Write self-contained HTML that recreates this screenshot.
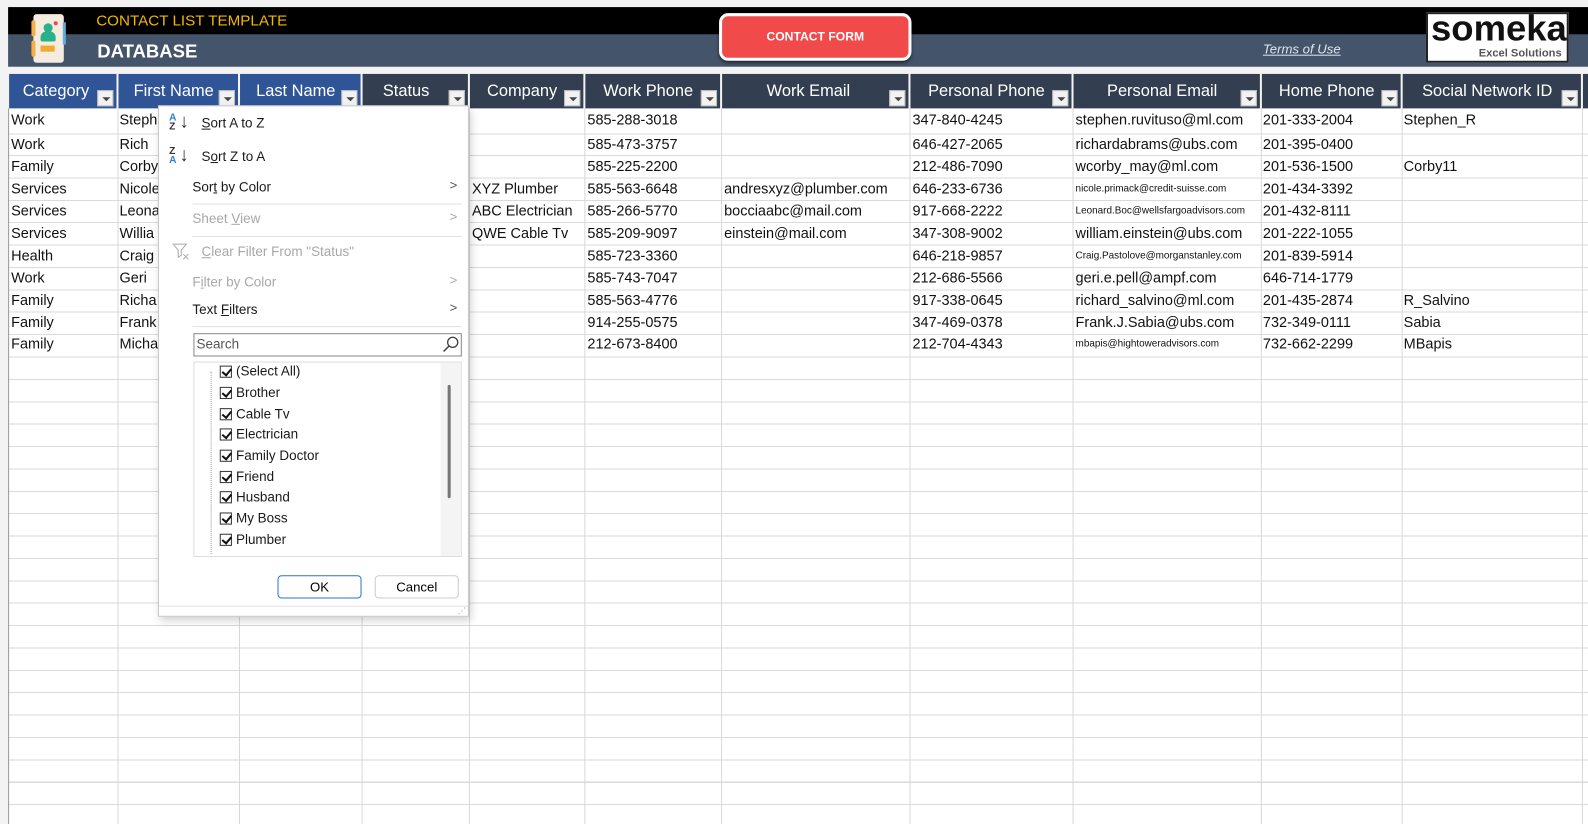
<!DOCTYPE html>
<html><head><meta charset="utf-8"><style>
*{margin:0;padding:0;box-sizing:border-box}
body{width:1588px;height:814px;overflow:hidden;background:#f3f3f3;font-family:"Liberation Sans",Calibri,sans-serif;position:relative}
#w{position:absolute;left:0;top:0;width:1568px;height:804px;transform:scale(1.01276);transform-origin:0 0}
.a{position:absolute;white-space:nowrap}
.t{position:absolute;font-size:14.3px;color:#111;white-space:nowrap;line-height:18px}
.s{font-size:9.8px}
.h{position:absolute;top:73px;height:34px;color:#fff;font-size:16.2px;line-height:34px;text-align:center}
.dd{position:absolute;width:16px;height:16px;background:#f2f2f2;border:1px solid #bbb;bottom:2px;right:3px}
.dd:after{content:"";position:absolute;left:4px;top:6px;border-left:4px solid transparent;border-right:4px solid transparent;border-top:4px solid #444}
.vl{position:absolute;top:107px;width:1px;height:707px;background:#d8d8d8}
.mi{position:absolute;font-family:"Liberation Sans",sans-serif;font-size:13.3px;color:#1a1a1a;white-space:nowrap}
.g{color:#a8a8a8}
.ar{position:absolute;right:10px;font-size:13px;color:#555}
.sep{position:absolute;left:190px;width:266px;height:1px;background:#e2e2e2}
.cb{position:absolute;font-size:13.3px;color:#1a1a1a;white-space:nowrap;line-height:16px}
.cb i{display:inline-block;width:12px;height:12px;border:1px solid #333;vertical-align:-2px;margin-right:4px;position:relative}
.cb i:after{content:"";position:absolute;left:3px;top:0px;width:4px;height:7px;border:solid #111;border-width:0 2px 2px 0;transform:rotate(40deg)}
</style></head><body><div id="w">
<div class="a" style="left:8px;top:7px;width:1560px;height:27px;background:#000"></div>
<div class="a" style="left:8px;top:34px;width:1560px;height:32px;background:#44546a"></div>
<div class="a" style="left:33px;top:14px;width:30px;height:48px;background:#f5ecdf;border-radius:3px"></div>
<div class="a" style="left:31px;top:20px;width:4px;height:16px;background:#f4b040;border-radius:2px"></div>
<div class="a" style="left:31px;top:40px;width:4px;height:16px;background:#f4b040;border-radius:2px"></div>
<div class="a" style="left:62px;top:22px;width:3px;height:22px;background:#5cb0e0"></div>
<div class="a" style="left:43px;top:23px;width:9px;height:9px;background:#27b28c;border-radius:50%"></div>
<div class="a" style="left:40px;top:31px;width:15px;height:10px;background:#27b28c;border-radius:6px 6px 2px 2px"></div>
<div class="a" style="left:53px;top:21px;width:4px;height:4px;background:#e84a5f;border-radius:50%"></div>
<div class="a" style="left:40px;top:45px;width:14px;height:6px;background:#f4a930"></div>
<div class="a" style="left:95px;top:12px;font-size:15px;color:#f2b800">CONTACT LIST TEMPLATE</div>
<div class="a" style="left:96px;top:40px;font-size:18.3px;color:#fff;font-weight:bold">DATABASE</div>
<div class="a" style="left:710px;top:13px;width:190px;height:47px;background:#f04a4a;border:3px solid #fff;border-radius:9px;box-shadow:0 2px 3px rgba(0,0,0,.5);color:#fff;font-weight:bold;font-size:12px;text-align:center;line-height:41px">CONTACT FORM</div>
<div class="a" style="left:1247px;top:41px;font-size:13px;color:#dfe6f0;font-style:italic;text-decoration:underline">Terms of Use</div>
<div class="a" style="left:1408px;top:12px;width:141px;height:50px;background:#fff;border:2px solid #222;overflow:hidden">
<div class="a" style="left:3px;top:-7px;font-size:36px;color:#111;font-weight:bold">someka</div>
<div class="a" style="right:5px;top:33px;font-size:11px;color:#555;font-weight:bold">Excel Solutions</div></div>
<div class="a" style="left:8px;top:107px;width:1580px;height:707px;background:#fff repeating-linear-gradient(to bottom,transparent 0,transparent 25px,#dadada 25px,#dadada 26px) 0 0/100% 26px no-repeat"></div>
<div class="a" style="left:8px;top:132px;width:1580px;height:682px;background:repeating-linear-gradient(to bottom,transparent 0,transparent 21.1px,#dadada 21.1px,#dadada 22.1px)"></div>
<div class="vl" style="left:8px;background:#999"></div>
<div class="vl" style="left:116px"></div><div class="vl" style="left:236px"></div><div class="vl" style="left:357px"></div><div class="vl" style="left:463px"></div><div class="vl" style="left:577px"></div><div class="vl" style="left:712px"></div><div class="vl" style="left:898px"></div><div class="vl" style="left:1059px"></div><div class="vl" style="left:1245px"></div><div class="vl" style="left:1384px"></div><div class="vl" style="left:1562px"></div>
<div class="a" style="left:8px;top:66px;width:1580px;height:7px;background:#f3f3f3"></div>
<div class="h" style="left:9px;width:106px;background:#2f5597">Category&nbsp;&nbsp;&nbsp;<div class="dd"></div></div>
<div class="h" style="left:117px;width:118px;background:#2f5597">First Name&nbsp;&nbsp;<div class="dd"></div></div>
<div class="h" style="left:237px;width:119px;background:#2f5597">Last Name&nbsp;&nbsp;<div class="dd"></div></div>
<div class="h" style="left:358px;width:104px;background:#333f50">Status&nbsp;&nbsp;&nbsp;&nbsp;<div class="dd"></div></div>
<div class="h" style="left:464px;width:112px;background:#333f50">Company&nbsp;&nbsp;<div class="dd"></div></div>
<div class="h" style="left:578px;width:133px;background:#333f50">Work Phone&nbsp;&nbsp;<div class="dd"></div></div>
<div class="h" style="left:713px;width:184px;background:#333f50">Work Email&nbsp;&nbsp;&nbsp;<div class="dd"></div></div>
<div class="h" style="left:899px;width:159px;background:#333f50">Personal Phone&nbsp;&nbsp;<div class="dd"></div></div>
<div class="h" style="left:1060px;width:184px;background:#333f50">Personal Email&nbsp;&nbsp;<div class="dd"></div></div>
<div class="h" style="left:1246px;width:137px;background:#333f50">Home Phone&nbsp;&nbsp;<div class="dd"></div></div>
<div class="h" style="left:1385px;width:176px;background:#333f50">Social Network ID&nbsp;&nbsp;<div class="dd"></div></div>
<div class="h" style="left:1563px;width:5px;background:#333f50"></div>
<div class="t" style="left:11px;top:110px">Work</div><div class="t" style="left:118px;top:110px">Steph</div><div class="t" style="left:580px;top:110px">585-288-3018</div><div class="t" style="left:901px;top:110px">347-840-4245</div><div class="t" style="left:1062px;top:110px">stephen.ruvituso@ml.com</div><div class="t" style="left:1247px;top:110px">201-333-2004</div><div class="t" style="left:1386px;top:110px">Stephen_R</div>
<div class="t" style="left:11px;top:134px">Work</div><div class="t" style="left:118px;top:134px">Rich</div><div class="t" style="left:580px;top:134px">585-473-3757</div><div class="t" style="left:901px;top:134px">646-427-2065</div><div class="t" style="left:1062px;top:134px">richardabrams@ubs.com</div><div class="t" style="left:1247px;top:134px">201-395-0400</div>
<div class="t" style="left:11px;top:156px">Family</div><div class="t" style="left:118px;top:156px">Corby</div><div class="t" style="left:580px;top:156px">585-225-2200</div><div class="t" style="left:901px;top:156px">212-486-7090</div><div class="t" style="left:1062px;top:156px">wcorby_may@ml.com</div><div class="t" style="left:1247px;top:156px">201-536-1500</div><div class="t" style="left:1386px;top:156px">Corby11</div>
<div class="t" style="left:11px;top:178px">Services</div><div class="t" style="left:118px;top:178px">Nicole</div><div class="t" style="left:466px;top:178px">XYZ Plumber</div><div class="t" style="left:580px;top:178px">585-563-6648</div><div class="t" style="left:715px;top:178px">andresxyz@plumber.com</div><div class="t" style="left:901px;top:178px">646-233-6736</div><div class="t s" style="left:1062px;top:178px">nicole.primack@credit-suisse.com</div><div class="t" style="left:1247px;top:178px">201-434-3392</div>
<div class="t" style="left:11px;top:200px">Services</div><div class="t" style="left:118px;top:200px">Leona</div><div class="t" style="left:466px;top:200px">ABC Electrician</div><div class="t" style="left:580px;top:200px">585-266-5770</div><div class="t" style="left:715px;top:200px">bocciaabc@mail.com</div><div class="t" style="left:901px;top:200px">917-668-2222</div><div class="t s" style="left:1062px;top:200px">Leonard.Boc@wellsfargoadvisors.com</div><div class="t" style="left:1247px;top:200px">201-432-8111</div>
<div class="t" style="left:11px;top:222px">Services</div><div class="t" style="left:118px;top:222px">Willia</div><div class="t" style="left:466px;top:222px">QWE Cable Tv</div><div class="t" style="left:580px;top:222px">585-209-9097</div><div class="t" style="left:715px;top:222px">einstein@mail.com</div><div class="t" style="left:901px;top:222px">347-308-9002</div><div class="t" style="left:1062px;top:222px">william.einstein@ubs.com</div><div class="t" style="left:1247px;top:222px">201-222-1055</div>
<div class="t" style="left:11px;top:244px">Health</div><div class="t" style="left:118px;top:244px">Craig</div><div class="t" style="left:580px;top:244px">585-723-3360</div><div class="t" style="left:901px;top:244px">646-218-9857</div><div class="t s" style="left:1062px;top:244px">Craig.Pastolove@morganstanley.com</div><div class="t" style="left:1247px;top:244px">201-839-5914</div>
<div class="t" style="left:11px;top:266px">Work</div><div class="t" style="left:118px;top:266px">Geri</div><div class="t" style="left:580px;top:266px">585-743-7047</div><div class="t" style="left:901px;top:266px">212-686-5566</div><div class="t" style="left:1062px;top:266px">geri.e.pell@ampf.com</div><div class="t" style="left:1247px;top:266px">646-714-1779</div>
<div class="t" style="left:11px;top:288px">Family</div><div class="t" style="left:118px;top:288px">Richa</div><div class="t" style="left:580px;top:288px">585-563-4776</div><div class="t" style="left:901px;top:288px">917-338-0645</div><div class="t" style="left:1062px;top:288px">richard_salvino@ml.com</div><div class="t" style="left:1247px;top:288px">201-435-2874</div><div class="t" style="left:1386px;top:288px">R_Salvino</div>
<div class="t" style="left:11px;top:310px">Family</div><div class="t" style="left:118px;top:310px">Frank</div><div class="t" style="left:580px;top:310px">914-255-0575</div><div class="t" style="left:901px;top:310px">347-469-0378</div><div class="t" style="left:1062px;top:310px">Frank.J.Sabia@ubs.com</div><div class="t" style="left:1247px;top:310px">732-349-0111</div><div class="t" style="left:1386px;top:310px">Sabia</div>
<div class="t" style="left:11px;top:331px">Family</div><div class="t" style="left:118px;top:331px">Micha</div><div class="t" style="left:580px;top:331px">212-673-8400</div><div class="t" style="left:901px;top:331px">212-704-4343</div><div class="t s" style="left:1062px;top:331px">mbapis@hightoweradvisors.com</div><div class="t" style="left:1247px;top:331px">732-662-2299</div><div class="t" style="left:1386px;top:331px">MBapis</div>
<div class="a" style="left:156px;top:104px;width:307px;height:505px;background:#fff;border:1px solid #c8c8c8;box-shadow:2px 4px 8px rgba(0,0,0,.18)"></div>
<div class="mi" style="left:167px;top:112px;font-size:10px;line-height:9px;color:#2a7fd4;font-weight:bold">A<br><span style="color:#333">Z</span></div><div class="mi" style="left:177px;top:110px;font-size:19px;color:#333">↓</div>
<div class="mi" style="left:199px;top:114px"><u>S</u>ort A to Z</div>
<div class="mi" style="left:167px;top:145px;font-size:10px;line-height:9px;color:#333;font-weight:bold">Z<br><span style="color:#2a7fd4">A</span></div><div class="mi" style="left:177px;top:143px;font-size:19px;color:#333">↓</div>
<div class="mi" style="left:199px;top:147px">S<u>o</u>rt Z to A</div>
<div class="mi" style="left:190px;top:177px">Sor<u>t</u> by Color</div><div class="ar" style="top:175px;left:444px">&gt;</div>
<div class="sep" style="top:201px"></div>
<div class="mi g" style="left:190px;top:208px">Sheet <u>V</u>iew</div><div class="ar g" style="top:206px;left:444px;color:#aaa">&gt;</div>
<div class="sep" style="top:233px"></div>
<svg class="a" style="left:170px;top:240px" width="18" height="18" viewBox="0 0 18 18"><path d="M1 1h13l-5 6v5l-3 2V7z" fill="none" stroke="#aaa"/><path d="M11 11l5 5M16 11l-5 5" stroke="#aaa"/></svg>
<div class="mi g" style="left:199px;top:241px"><u>C</u>lear Filter From "Status"</div>
<div class="mi g" style="left:190px;top:271px">F<u>i</u>lter by Color</div><div class="ar" style="top:269px;left:444px;color:#aaa">&gt;</div>
<div class="mi" style="left:190px;top:298px">Text <u>F</u>ilters</div><div class="ar" style="top:296px;left:444px">&gt;</div>
<div class="sep" style="top:322px"></div>
<div class="a" style="left:191px;top:329px;width:265px;height:23px;border:1px solid #888;background:#fff"></div>
<div class="mi" style="left:194px;top:332px;color:#555">Search</div>
<svg class="a" style="left:436px;top:331px" width="18" height="18" viewBox="0 0 18 18"><circle cx="11" cy="7" r="5" fill="none" stroke="#444" stroke-width="1.3"/><path d="M7.5 10.5L2 16" stroke="#444" stroke-width="1.5"/></svg>
<div class="a" style="left:191px;top:357px;width:265px;height:193px;border:1px solid #ddd;background:#fff"></div>
<div class="a" style="left:435px;top:358px;width:20px;height:191px;background:#f4f4f4"></div>
<div class="a" style="left:442px;top:380px;width:3px;height:112px;background:#777;border-radius:2px"></div>
<div class="a" style="left:208px;top:367px;width:1px;height:180px;border-left:1px dotted #999"></div>
<div class="cb" style="left:217px;top:359px"><i></i>(Select All)</div>
<div class="cb" style="left:217px;top:380px"><i></i>Brother</div>
<div class="cb" style="left:217px;top:401px"><i></i>Cable Tv</div>
<div class="cb" style="left:217px;top:421px"><i></i>Electrician</div>
<div class="cb" style="left:217px;top:442px"><i></i>Family Doctor</div>
<div class="cb" style="left:217px;top:463px"><i></i>Friend</div>
<div class="cb" style="left:217px;top:483px"><i></i>Husband</div>
<div class="cb" style="left:217px;top:504px"><i></i>My Boss</div>
<div class="cb" style="left:217px;top:525px"><i></i>Plumber</div>
<div class="a" style="left:274px;top:568px;width:83px;height:23px;border:1px solid #2a74c9;border-radius:4px;background:#fff;text-align:center;font-size:13px;line-height:21px">OK</div>
<div class="a" style="left:370px;top:568px;width:83px;height:23px;border:1px solid #ccc;border-radius:4px;background:#fff;text-align:center;font-size:13px;line-height:21px">Cancel</div>
<div class="a" style="left:157px;top:598px;width:305px;height:1px;background:#e3e3e3"></div>
<div class="a" style="left:452px;top:599px;font-size:8px;color:#888">⋰</div>
</div></body></html>
